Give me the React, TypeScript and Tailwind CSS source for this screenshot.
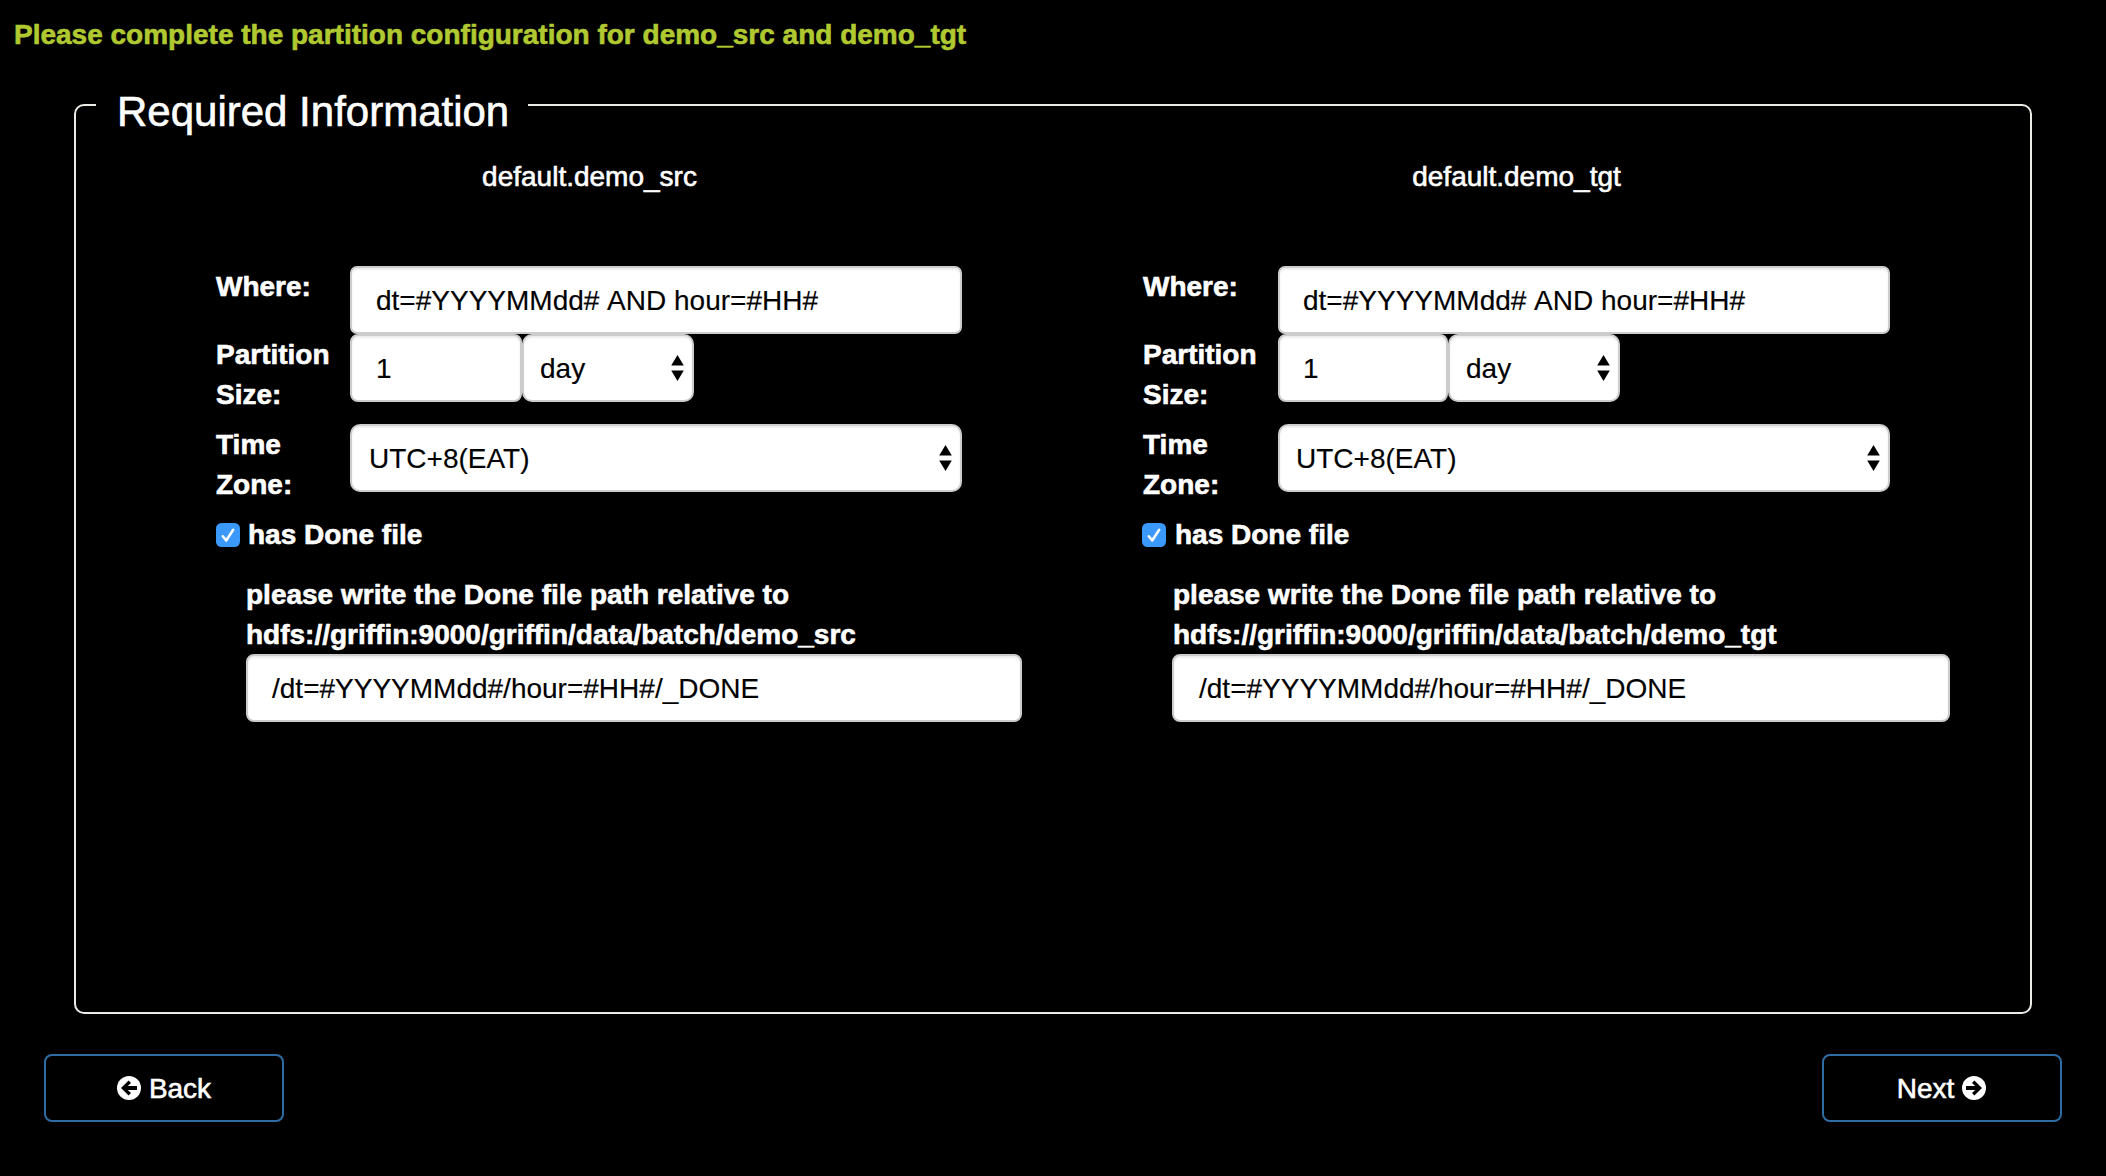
const FONT = "font-['Liberation_Sans',Arial,sans-serif]";
const BOX =
  'border-2 border-[#ccc] bg-white pt-px text-black shadow-[inset_0_2px_2px_rgba(0,0,0,0.075)] [-webkit-text-stroke-width:0.15px]';

type Side = {
  table: string;
  column: string;
  label: string;
  row: string;
  size: string;
  unit: string;
  zone: string;
  check: string;
  done: string;
  note: string;
  doneBox: string;
};

function Arrows() {
  return (
    <svg className="-mt-px shrink-0" width="13" height="26" viewBox="0 0 13 26" fill="#000">
      <path d="M6.5 0 12.8 10.5H0.2Z" />
      <path d="M6.5 26 12.8 15.5H0.2Z" />
    </svg>
  );
}

function Select({ value, className }: { value: string; className: string }) {
  return (
    <div className={`${BOX} ${className} flex h-[68px] items-center justify-between rounded-[10px] pr-[8px]`}>
      <span>{value}</span>
      <Arrows />
    </div>
  );
}

function Column({ s }: { s: Side }) {
  return (
    <section className={`${s.column} shrink-0`}>
      <h2 className="w-[747px] pt-px text-center">{s.table}</h2>
      <div className="mt-[69px] flex">
        <div className={`${s.label} shrink-0 pt-px font-bold`}>Where:</div>
        <div className={`${BOX} ${s.row} flex h-[68px] w-[612px] items-center rounded-[7px] [font-kerning:none]`}>
          dt=#YYYYMMdd# AND hour=#HH#
        </div>
      </div>
      <div className="flex h-[90px]">
        <div className={`${s.label} shrink-0 pt-px pr-4 font-bold`}>Partition Size:</div>
        <div className={`${BOX} ${s.row} ${s.size} flex h-[68px] items-center rounded-[8px]`}>1</div>
        <Select value="day" className={s.unit} />
      </div>
      <div className="flex h-[90px]">
        <div className={`${s.label} shrink-0 pt-px pr-10 font-bold`}>Time Zone:</div>
        <Select value="UTC+8(EAT)" className={s.zone} />
      </div>
      <div className="flex h-10 items-center font-bold">
        <svg width="24" height="24" viewBox="0 0 24 24" className={`${s.check} mt-[2px]`}>
          <rect width="24" height="24" rx="5.5" fill="#3b99fc" />
          <path
            d="M6.8 13.2 10.2 17.5 17.2 6.8"
            fill="none"
            stroke="#fff"
            strokeWidth="2.5"
            strokeLinecap="round"
            strokeLinejoin="round"
          />
        </svg>
        <span className="pt-[2px]">has Done file</span>
      </div>
      <div className={`${s.done} mt-5`}>
        <p className={`${s.note} h-20 pt-px font-bold`}>
          please write the Done file path relative to
          <br />
          hdfs://griffin:9000/griffin/data/batch/{s.table.replace('default.', '')}
        </p>
        <div className={`${BOX} ${s.doneBox} flex h-[68px] items-center rounded-[8px]`}>
          /dt=#YYYYMMdd#/hour=#HH#/_DONE
        </div>
      </div>
    </section>
  );
}

const SIDES: Side[] = [
  {
    table: 'default.demo_src',
    column: 'w-[927px]',
    label: 'w-[134px]',
    row: 'pl-[24px]',
    size: 'w-[172px]',
    unit: 'w-[172px] pl-[16px]',
    zone: 'w-[612px] pl-[17px]',
    check: 'mr-[8px]',
    done: 'ml-[30px]',
    note: 'pl-0',
    doneBox: 'w-[776px] pl-[24px]',
  },
  {
    table: 'default.demo_tgt',
    column: 'w-[811px]',
    label: 'w-[135px]',
    row: 'pl-[23px]',
    size: 'w-[170px]',
    unit: 'w-[172px] pl-[16px]',
    zone: 'w-[612px] pl-[16px]',
    check: '-ml-px mr-[9px]',
    done: 'ml-[29px]',
    note: 'pl-px',
    doneBox: 'w-[778px] pl-[25px]',
  },
];

function CircleArrow({ flip }: { flip?: boolean }) {
  return (
    <svg width="24" height="24" viewBox="0 0 24 24" className={flip ? 'rotate-180' : ''}>
      <circle cx="12" cy="12" r="12" fill="#fff" />
      <path
        d="M4 12 11.6 4.5 14 6.9 10.8 10.1H20V13.9H10.8L14 17.1 11.6 19.5Z"
        fill="#000"
      />
    </svg>
  );
}

const BUTTON =
  'flex h-[68px] w-[240px] items-center justify-center rounded-[8px] border-2 border-[#2e6da4]';

export default function App() {
  return (
    <main
      className={`${FONT} h-[1176px] w-[2106px] overflow-hidden bg-black text-[28px] leading-[40px] text-white [-webkit-text-stroke-width:0.6px]`}
    >
      <p className="h-[68px] pt-[15px] pl-[14px] font-bold text-[#b1c931]">
        Please complete the partition configuration for demo_src and demo_tgt
      </p>
      <fieldset className="mx-[74px] h-[946px] min-w-0 rounded-[10px] border-2 border-[#ebebe8] pl-5">
        <legend className="h-[74px] w-[432px] pt-[14px] pl-[21px] text-[42px] leading-[60px] whitespace-nowrap">
          Required Information
        </legend>
        <div className="mt-[14px] ml-[120px] flex">
          {SIDES.map((s) => (
            <Column key={s.table} s={s} />
          ))}
        </div>
      </fieldset>
      <div className="mt-10 flex justify-between px-[44px]">
        <button className={`${BUTTON} gap-[8px]`}>
          <CircleArrow />
          <span className="pt-[2px]">Back</span>
        </button>
        <button className={`${BUTTON} gap-[8px] pr-px`}>
          <span className="pt-[2px]">Next</span>
          <CircleArrow flip />
        </button>
      </div>
    </main>
  );
}
